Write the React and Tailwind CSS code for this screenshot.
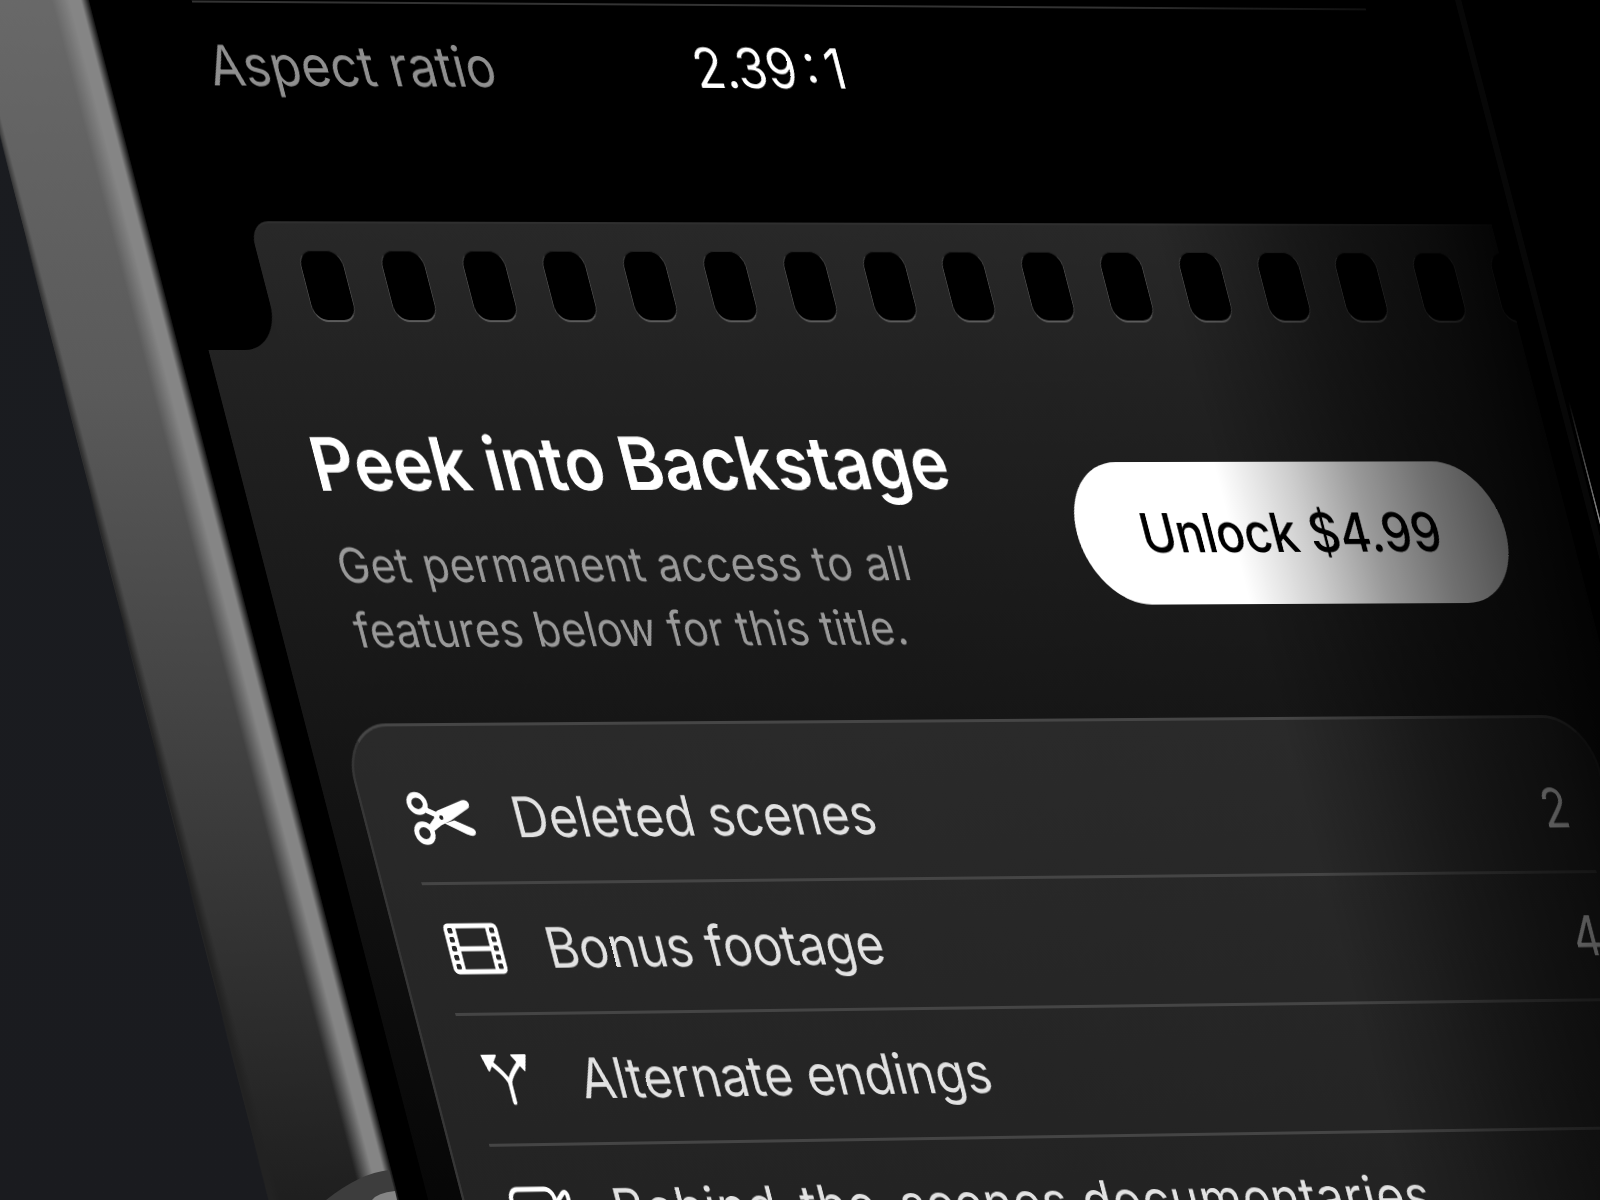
import clsx from 'clsx'

const HOLE_COUNT = 16

const FEATURES = [
  { id: 'deleted', icon: ScissorsIcon, label: 'Deleted scenes', tracking: 'tracking-[0.35px]', count: 2 },
  { id: 'bonus', icon: FilmIcon, label: 'Bonus footage', tracking: 'tracking-normal', count: 4 },
  { id: 'endings', icon: ForkIcon, label: 'Alternate endings', tracking: 'tracking-[0.2px]' },
  { id: 'docs', icon: CameraIcon, label: 'Behind-the-scenes documentaries', tracking: 'tracking-[0.75px]' },
]

function ScissorsIcon() {
  return (
    <svg width="78" height="54" viewBox="0 0 78 54" fill="none" className="shrink-0">
      <path d="M22 19 L34 24" stroke="white" strokeWidth="6" />
      <path d="M41 32.5 L54 29.5 L75 38 Q78.5 41 75.5 44 Q73 46.5 65 43.5 Z" fill="white" />
      <path d="M19.5 35.5 L29.5 27 Q31.5 21.5 36 19.5 L69 9.5 Q75 8.5 76.8 12 Q78 16 74 18 L50 29.5 L36 34.5 L24 41 Z" fill="white" />
      <ellipse cx="13.1" cy="12.2" rx="9.8" ry="8.6" stroke="white" strokeWidth="5.8" />
      <ellipse cx="13.4" cy="42" rx="9.8" ry="8.8" stroke="white" strokeWidth="5.8" />
      <circle cx="38.7" cy="26.6" r="2.4" fill="#222" />
    </svg>
  )
}

function FilmIcon() {
  return (
    <svg width="68" height="52" viewBox="0 0 68 52" fill="none" className="shrink-0">
      <rect x="0.5" y="0.5" width="67" height="51" rx="6" fill="white" />
      <rect x="15.5" y="5.5" width="37" height="18" fill="#272727" />
      <rect x="15.5" y="28.5" width="37" height="18" fill="#272727" />
      {[5, 14, 23, 32, 41].map(y => (
        <g key={y} fill="#272727">
          <rect x="5" y={y} width="6" height="5.5" rx="1.5" />
          <rect x="57" y={y} width="6" height="5.5" rx="1.5" />
        </g>
      ))}
    </svg>
  )
}

function ForkIcon() {
  return (
    <svg width="60" height="52" viewBox="0 0 60 52" fill="none" className="shrink-0">
      <path d="M30 49 V31 Q30 24 12 9 M30 31 Q30 24 48 9" stroke="white" strokeWidth="5" strokeLinecap="round" />
      <path d="M3 2 L20 2 L8 17 Z M57 2 L40 2 L52 17 Z" fill="white" stroke="white" strokeWidth="2" strokeLinejoin="round" />
    </svg>
  )
}

function CameraIcon() {
  return (
    <svg width="82" height="48" viewBox="0 0 82 48" fill="none" className="shrink-0">
      <rect x="5" y="3" width="54" height="42" rx="10" stroke="white" strokeWidth="5" />
      <path d="M59 18 L70 8 Q75 4 76 10 V38 Q75 44 70 40 L59 30" stroke="white" strokeWidth="5" strokeLinejoin="round" />
    </svg>
  )
}

function FeatureRow({ icon: Icon, label, tracking, count, first }) {
  return (
    <li
      className={clsx(
        'ml-[48px] mr-[36px] flex h-[131.1px] items-center border-t-3',
        first ? 'border-transparent' : 'border-[#454545]',
      )}
    >
      <div className="flex w-[92px] shrink-0 justify-center">
        <Icon />
      </div>
      <div className="ml-[42px] grow text-[56px] whitespace-nowrap text-[#e2e2e2]">
        <span className={clsx('inline-block origin-left scale-x-110', tracking)}>{label}</span>
      </div>
      {count && <span className="pr-[16px] text-[56px] text-[#f4f4f4]">{count}</span>}
    </li>
  )
}

/** Perforated top edge of the panel, with the notch cut out at its left. */
function FilmStrip() {
  return (
    <div className="flex h-[129px] bg-[#232323]">
      <div className="w-[91px] shrink-0 rounded-br-[46px] bg-black" />
      <div className="min-w-0 grow bg-black">
        <div className="flex h-full gap-[46.8px] overflow-hidden rounded-tl-[24px] border-t-2 border-[#2f2f2f] bg-linear-to-b from-[#282828] to-[#232323] pl-[50px] pt-[27px]">
          {Array.from({ length: HOLE_COUNT }, (_, i) => (
            <div
              key={i}
              className="h-[72px] w-[54px] shrink-0 rounded-[17px] border border-b-2 border-[#444] border-t-[#222] border-b-[#5c5c5c] bg-black"
            />
          ))}
        </div>
      </div>
    </div>
  )
}

function Offer() {
  return (
    <div className="flex h-[374px] justify-between pl-[91px] pr-[85px]">
      <div className="pt-[74px] whitespace-nowrap">
        <h1 className="h-[80px] origin-left scale-x-110 text-[74px] leading-[80px] font-semibold text-white">
          Peek into Backstage
        </h1>
        <p className="mt-[29px] origin-left scale-x-110 text-[48px] leading-[65px] text-[#999]">
          <span className="block tracking-[0.7px]">Get permanent access to all</span>
          <span className="block tracking-[0.4px]">features below for this title.</span>
        </p>
      </div>
      <button className="mt-[114px] h-[145px] w-[552px] rounded-full bg-white pr-[4px] text-[55px] font-medium text-black">
        <span className="inline-block scale-x-110 tracking-[-0.2px]">Unlock $4.99</span>
      </button>
    </div>
  )
}

function Screen() {
  return (
    <div className="w-[1668px] shrink-0 bg-black">
      <div className="mx-[91px] mt-[20px] flex h-[221px] border-t-2 border-[#333] pt-[28px] text-[56px] leading-[70px]">
        <span className="w-[606px] origin-left scale-x-110 tracking-[0.4px] text-[#8f8f8f]">Aspect ratio</span>
        <span className="origin-left scale-x-110 text-white [word-spacing:-0.13em]">2.39 : 1</span>
      </div>
      <div className="h-[1060px] bg-linear-to-b from-[#272727] via-[#171717] via-45% to-[#050505]">
        <FilmStrip />
        <Offer />
        <ul className="mx-[42px] h-[620px] rounded-[58px] border-3 border-[#363636] border-t-[#464646] bg-linear-to-b from-[#2a2a2a] to-[#212121] pt-[25px]">
          {FEATURES.map((feature, i) => (
            <FeatureRow key={feature.id} first={i === 0} {...feature} />
          ))}
        </ul>
      </div>
    </div>
  )
}

function LeftFrame() {
  return (
    <div className="flex w-[200px] shrink-0 [clip-path:polygon(13px_0,100%_0,100%_100%,3px_100%)]">
      <div className="w-[164px] bg-[linear-gradient(90deg,#222_8px,transparent_18px,transparent_118px,#858585_140px,#858585_154px,#111_164px),linear-gradient(180deg,#696969,#5a5a5a_32%,#3c3c3c_65%,#1e1e1e_96%)]" />
      <div className="grow bg-black" />
    </div>
  )
}

function RightFrame() {
  return (
    <div className="flex grow bg-black">
      <div className="ml-[28px] w-[8px] bg-[#070707]" />
      <div className="ml-[4px] w-[2px] bg-linear-to-b from-transparent from-33% to-[#aaa] to-45%" />
    </div>
  )
}

export default function App() {
  return (
    <div className="relative h-[1200px] w-[1600px] overflow-hidden bg-linear-to-b from-[#1a1c20] to-[#1a1b1f] font-[Inter,sans-serif]">
      {/* Phone lying in perspective */}
      <div className="relative flex h-[1280px] w-[2300px] origin-top-left [transform:matrix3d(0.8125,0.00546875,0,0.000015625,0.2585,1,0,0,0,0,1,0,-49.67,-21.09,0,0.996875)]">
        <LeftFrame />
        <Screen />
        <RightFrame />
        {/* Light falls off towards the right side of the screen */}
        <div className="pointer-events-none absolute inset-y-0 left-[1429px] w-[460px] bg-[linear-gradient(90deg,transparent,rgba(0,0,0,0.2)_21%,rgba(0,0,0,0.4)_39%,rgba(0,0,0,0.56)_58%,rgba(0,0,0,0.68)_76%,rgba(0,0,0,0.87)_95%)]" />
      </div>
      {/* Antenna band at the bottom of the metal frame */}
      <svg width="100" height="40" viewBox="0 0 100 40" className="absolute bottom-0 left-[320px]">
        <path d="M6 40 Q40 13 69 10 L77 40 Z" fill="#3d3d3d" />
        <path d="M52 40 Q57 33 75 31 L77 40 Z" fill="#858585" />
      </svg>
    </div>
  )
}
